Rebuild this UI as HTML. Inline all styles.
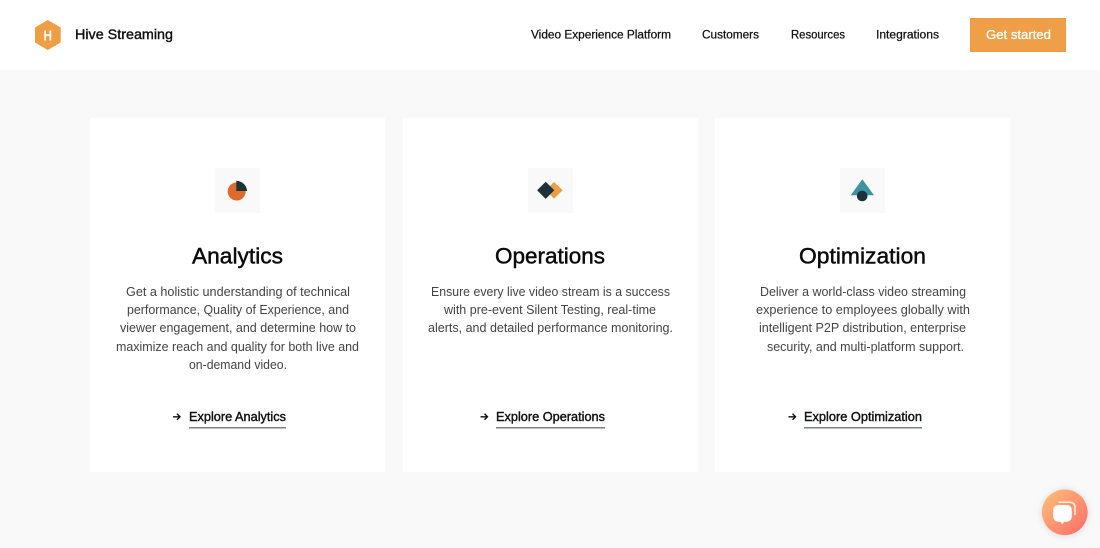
<!DOCTYPE html>
<html lang="en">
<head>
<meta charset="utf-8">
<title>Hive Streaming</title>
<style>
html,body{margin:0;padding:0;width:1100px;height:548px;overflow:hidden;background:#f9f9f9}
body{position:relative;font-family:"Liberation Sans",sans-serif}
.hdr{position:absolute;left:0;top:0;width:1100px;height:70px;background:#fff}
.btn{position:absolute;left:970px;top:18px;width:94px;height:32px;background:#ee9f47;border:1px solid #ee9a3c}
.card{position:absolute;top:118px;width:294.5px;height:354px;background:#fff}
.tile{position:absolute;top:168px;width:44.5px;height:44.5px;background:#f9f9f9}
svg.t{position:absolute;left:0;top:0}
.n{font-size:11.5px;fill:#111;stroke:#111;stroke-width:.25px}
.h{font-size:22px;fill:#0a0a0a;stroke:#0a0a0a;stroke-width:.45px}
.b{font-size:12.5px;fill:#444}
.l{font-size:12.5px;fill:#111;stroke:#111;stroke-width:.4px}
</style>
</head>
<body>
<div class="hdr"></div>
<div class="btn"></div>
<div class="card" style="left:90px"></div>
<div class="card" style="left:403px"></div>
<div class="card" style="left:715px"></div>
<div class="tile" style="left:215px"></div>
<div class="tile" style="left:528px"></div>
<div class="tile" style="left:840px"></div>

<svg class="t" width="1100" height="548" viewBox="0 0 1100 548">
  <defs>
    <linearGradient id="g" x1="0" y1="0" x2="1" y2="1">
      <stop offset="0" stop-color="#fdc275"/>
      <stop offset="1" stop-color="#fd6a6a"/>
    </linearGradient>
    <filter id="s" x="-30%" y="-30%" width="160%" height="160%">
      <feGaussianBlur stdDeviation="3"/>
    </filter>
  </defs>

  <!-- logo -->
  <path d="M47.800 20 L60.700 27.500 V42.500 L47.800 50 L35 42.500 V27.500 Z" fill="#ee9f45"/>
  <text x="43.500" y="40.700" font-size="15" font-weight="bold" fill="#fff" textLength="8.500" lengthAdjust="spacingAndGlyphs">H</text>
  <text x="75" y="39" font-size="14" fill="#111" stroke="#111" stroke-width=".4" textLength="98" lengthAdjust="spacingAndGlyphs">Hive Streaming</text>

  <!-- nav -->
  <text class="n" x="531" y="38.700" textLength="140" lengthAdjust="spacingAndGlyphs">Video Experience Platform</text>
  <text class="n" x="702" y="38.700" textLength="57" lengthAdjust="spacingAndGlyphs">Customers</text>
  <text class="n" x="791" y="38.700" textLength="54" lengthAdjust="spacingAndGlyphs">Resources</text>
  <text class="n" x="876" y="38.700" textLength="63" lengthAdjust="spacingAndGlyphs">Integrations</text>
  <text x="986" y="39" font-size="12.500" fill="#fff" stroke="#fff" stroke-width=".3" textLength="65" lengthAdjust="spacingAndGlyphs">Get started</text>

  <!-- icon 1 -->
  <circle cx="236.700" cy="191.500" r="9" fill="#de6b2d"/>
  <path d="M236.300 180.800 A10.700 10.700 0 0 1 247 191 H236.300 Z" fill="#1f3238"/>

  <!-- icon 2 -->
  <path d="M554 182 L562.700 190.300 L554 198.600 L545.500 190.300 Z" fill="#ee9f45"/>
  <path d="M545.700 181.700 L554.300 190.300 L545.700 198.900 L537.100 190.300 Z" fill="#1f3238"/>

  <!-- icon 3 -->
  <path d="M862.300 179.300 L874 195.200 H850.700 Z" fill="#3b93a3"/>
  <circle cx="862.200" cy="196" r="5.300" fill="#1f3238"/>

  <!-- headings -->
  <text class="h" x="192" y="263.500" textLength="91" lengthAdjust="spacingAndGlyphs">Analytics</text>
  <text class="h" x="495" y="263.500" textLength="110" lengthAdjust="spacingAndGlyphs">Operations</text>
  <text class="h" x="799" y="263.500" textLength="127" lengthAdjust="spacingAndGlyphs">Optimization</text>

  <!-- card 1 body -->
  <text class="b" x="126" y="296" textLength="224" lengthAdjust="spacingAndGlyphs">Get a holistic understanding of technical</text>
  <text class="b" x="127" y="314" textLength="222" lengthAdjust="spacingAndGlyphs">performance, Quality of Experience, and</text>
  <text class="b" x="120" y="332" textLength="236" lengthAdjust="spacingAndGlyphs">viewer engagement, and determine how to</text>
  <text class="b" x="116" y="351" textLength="243" lengthAdjust="spacingAndGlyphs">maximize reach and quality for both live and</text>
  <text class="b" x="189" y="369" textLength="98" lengthAdjust="spacingAndGlyphs">on-demand video.</text>

  <!-- card 2 body -->
  <text class="b" x="431" y="296" textLength="239" lengthAdjust="spacingAndGlyphs">Ensure every live video stream is a success</text>
  <text class="b" x="444" y="314" textLength="212" lengthAdjust="spacingAndGlyphs">with pre-event Silent Testing, real-time</text>
  <text class="b" x="428" y="332" textLength="245" lengthAdjust="spacingAndGlyphs">alerts, and detailed performance monitoring.</text>

  <!-- card 3 body -->
  <text class="b" x="760" y="296" textLength="206" lengthAdjust="spacingAndGlyphs">Deliver a world-class video streaming</text>
  <text class="b" x="756" y="314" textLength="214" lengthAdjust="spacingAndGlyphs">experience to employees globally with</text>
  <text class="b" x="759" y="332" textLength="207" lengthAdjust="spacingAndGlyphs">intelligent P2P distribution, enterprise</text>
  <text class="b" x="767" y="351" textLength="197" lengthAdjust="spacingAndGlyphs">security, and multi-platform support.</text>

  <!-- links -->
  <g fill="none" stroke="#111" stroke-width="1.400">
    <path d="M173 416.800 H180 M177 413.800 L180 416.800 L177 419.800"/>
    <path d="M480.500 416.800 H487.500 M484.500 413.800 L487.500 416.800 L484.500 419.800"/>
    <path d="M788.500 416.800 H795.500 M792.500 413.800 L795.500 416.800 L792.500 419.800"/>
  </g>
  <text class="l" x="189" y="421" textLength="97" lengthAdjust="spacingAndGlyphs">Explore Analytics</text>
  <text class="l" x="496" y="421" textLength="109" lengthAdjust="spacingAndGlyphs">Explore Operations</text>
  <text class="l" x="804" y="421" textLength="118" lengthAdjust="spacingAndGlyphs">Explore Optimization</text>
  <rect x="189" y="427" width="97" height="1.500" fill="#7c8280"/>
  <rect x="496" y="427" width="109" height="1.500" fill="#7c8280"/>
  <rect x="804" y="427" width="118" height="1.500" fill="#7c8280"/>

  <!-- chat bubble -->
  <circle cx="1065" cy="513" r="24" fill="#a9b4bb" opacity=".35" filter="url(#s)"/>
  <circle cx="1064.800" cy="512.300" r="22.800" fill="url(#g)"/>
  <path d="M1058.500 502.200 H1069.500 Q1075 502.200 1075 507.500 V515" fill="none" stroke="#fff" stroke-opacity=".85" stroke-width="1.500"/>
  <path d="M1059 505 H1066 Q1071.800 505 1071.800 510.500 V516 Q1071.800 521.700 1066 521.700 H1064.300 L1062.300 524.200 L1060.300 521.700 H1059 Q1053.200 521.700 1053.200 516 V510.500 Q1053.200 505 1059 505 Z" fill="#fff"/>
</svg>
</body>
</html>
